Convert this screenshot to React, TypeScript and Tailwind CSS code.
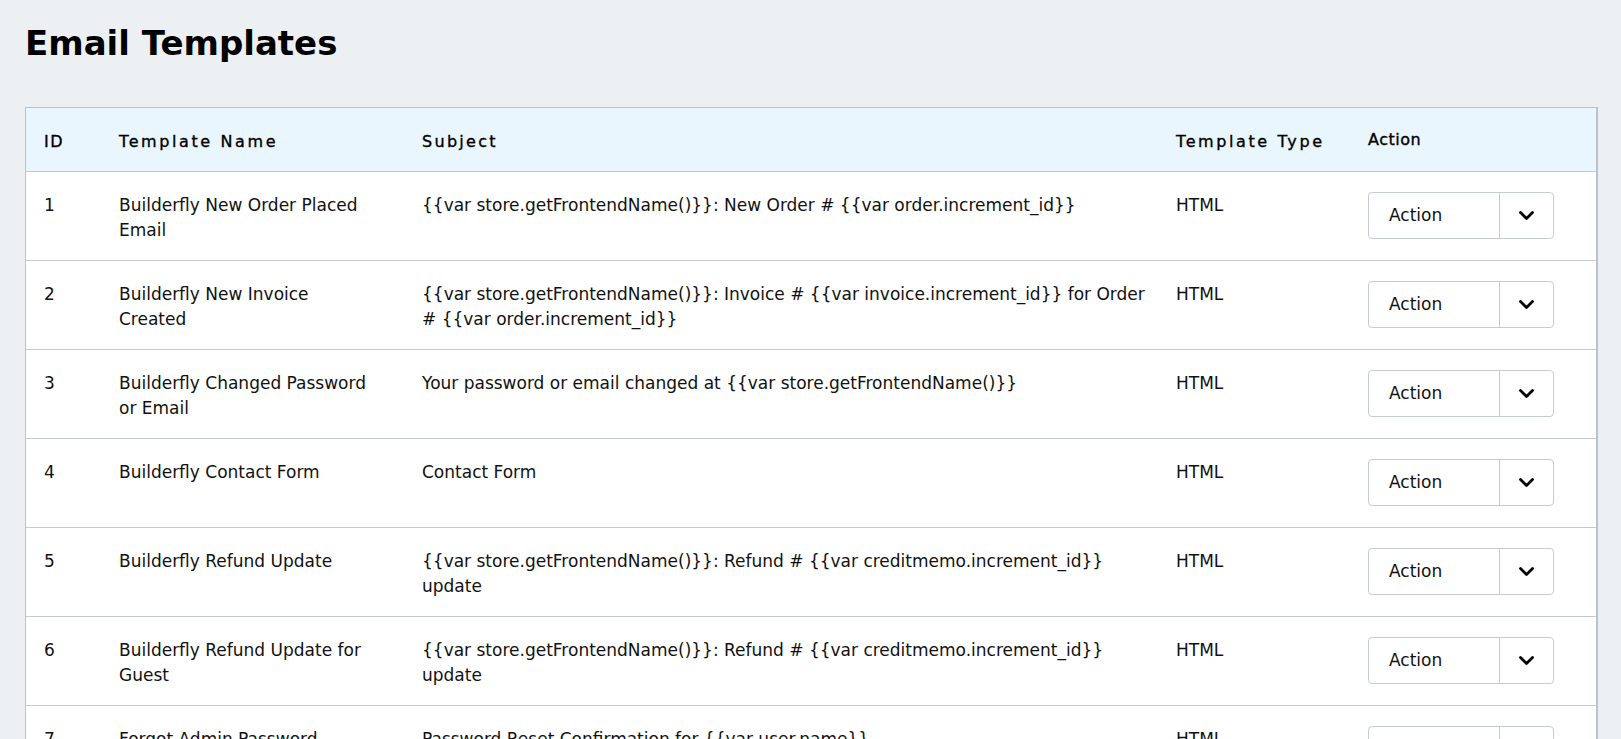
type Template = {
    id: number;
    name: string;
    subject: string;
    type: string;
};

const templates: Template[] = [
    { id: 1, name: 'Builderfly New Order Placed Email', subject: '{{var store.getFrontendName()}}: New Order # {{var order.increment_id}}', type: 'HTML' },
    { id: 2, name: 'Builderfly New Invoice Created', subject: '{{var store.getFrontendName()}}: Invoice # {{var invoice.increment_id}} for Order # {{var order.increment_id}}', type: 'HTML' },
    { id: 3, name: 'Builderfly Changed Password or Email', subject: 'Your password or email changed at {{var store.getFrontendName()}}', type: 'HTML' },
    { id: 4, name: 'Builderfly Contact Form', subject: 'Contact Form', type: 'HTML' },
    { id: 5, name: 'Builderfly Refund Update', subject: '{{var store.getFrontendName()}}: Refund # {{var creditmemo.increment_id}} update', type: 'HTML' },
    { id: 6, name: 'Builderfly Refund Update for Guest', subject: '{{var store.getFrontendName()}}: Refund # {{var creditmemo.increment_id}} update', type: 'HTML' },
    { id: 7, name: 'Forgot Admin Password', subject: 'Password Reset Confirmation for {{var user.name}}', type: 'HTML' },
];

// ── Split "Action" dropdown button ───────────────────────────
function ActionButton() {
    return (
        <div className="flex h-[47px] w-[186px] rounded-[4px] border border-[#c3cbd5] bg-white">
            <button className="flex flex-1 items-center pl-[20px] text-[17px] text-[#111]">
                Action
            </button>
            <button className="flex w-[54px] items-center justify-center border-l border-[#c3cbd5]">
                <svg width="17" height="11" viewBox="0 0 17 11" fill="none">
                    <path d="M2.5 2.5 L8.5 8.5 L14.5 2.5" stroke="#000" strokeWidth="2.8" strokeLinecap="round" strokeLinejoin="round" />
                </svg>
            </button>
        </div>
    );
}

export default function App() {
    return (
        <div className="min-h-screen bg-[#edf0f3] pl-[25px] pr-[23px] pt-[23px] pb-10 font-['DejaVu_Sans',sans-serif] text-[#111]">
            {/* Page header */}
            <h1 className="text-[34px] font-bold leading-[40px] text-black">Email Templates</h1>

            {/* Templates table */}
            <div className="mt-[44px] border border-r-2 border-[#b9c3ce] bg-white">
                <table className="w-full table-fixed border-collapse text-left">
                    <colgroup>
                        <col className="w-[75px]" />
                        <col className="w-[303px]" />
                        <col className="w-[754px]" />
                        <col className="w-[192px]" />
                        <col />
                    </colgroup>
                    <thead>
                        <tr className="h-[63px] border-b border-[#c2cad3] bg-[#eaf6fd] text-[16px] text-black [-webkit-text-stroke:0.35px_black]">
                            <th className="px-[18px] pt-[6px] align-middle font-normal tracking-[1.5px]">ID</th>
                            <th className="px-[18px] pt-[6px] align-middle font-normal tracking-[2.6px]">Template Name</th>
                            <th className="px-[18px] pt-[6px] align-middle font-normal tracking-[2.3px]">Subject</th>
                            <th className="px-[18px] pt-[6px] align-middle font-normal tracking-[2.6px]">Template Type</th>
                            <th className="px-[18px] pt-[2px] align-middle font-normal tracking-[0.5px]">Action</th>
                        </tr>
                    </thead>
                    <tbody className="text-[17px] leading-[25px]">
                        {templates.map((t) => (
                            <tr key={t.id} className="border-b border-[#c2cad3]">
                                <td className="px-[18px] pt-[21px] align-top">{t.id}</td>
                                <td className="pl-[18px] pr-[31px] pt-[21px] align-top">{t.name}</td>
                                <td className="pl-[18px] pr-[8px] pt-[21px] align-top">{t.subject}</td>
                                <td className="px-[18px] pt-[21px] align-top">{t.type}</td>
                                <td className="px-[18px] pt-[20px] pb-[21px] align-top">
                                    <ActionButton />
                                </td>
                            </tr>
                        ))}
                    </tbody>
                </table>
            </div>
        </div>
    );
}
